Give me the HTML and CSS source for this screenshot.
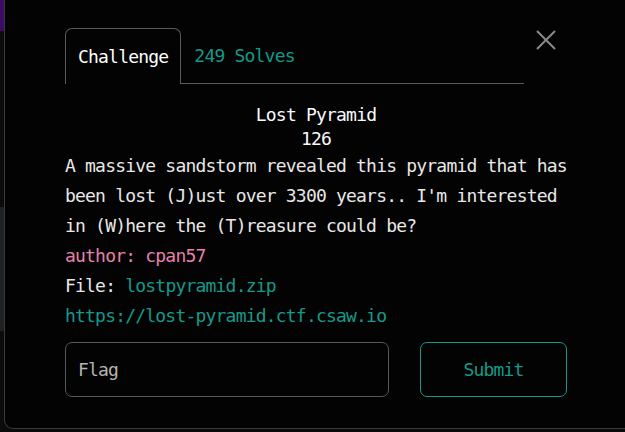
FILE: index.html
```html
<!DOCTYPE html>
<html>
<head>
<meta charset="utf-8">
<link rel="stylesheet" href="styles.css">
</head>
<body>
<div class="backdrop">
  <div class="bd-purple"></div>
  <div class="bd-strip"></div>
</div>
<div class="modal">
  <div class="header">
    <div class="tabs">
      <div class="tab active">Challenge</div>
      <div class="tab solves">249 Solves</div>
    </div>
    <button class="close" aria-label="Close">
      <svg width="20" height="20" viewBox="0 0 20 20"><path d="M1 1 L19 19 M19 1 L1 19" stroke="#8a8a8a" stroke-width="2" fill="none"/></svg>
    </button>
  </div>
  <div class="title">
    <div>Lost Pyramid</div>
    <div>126</div>
  </div>
  <div class="desc">
    <p>A massive sandstorm revealed this pyramid that has been lost (J)ust over 3300 years.. I'm interested in (W)here the (T)reasure could be?</p>
    <p class="author">author: cpan57</p>
    <p>File: <span class="link">lostpyramid.zip</span></p>
    <p class="link">https://lost-pyramid.ctf.csaw.io</p>
  </div>
  <div class="form">
    <div class="input">Flag</div>
    <div class="submit">Submit</div>
  </div>
</div>
</body>
</html>
```
FILE: styles.css
```css
html, body {
  margin: 0;
  padding: 0;
  background: #0b0b0b;
  width: 625px;
  height: 432px;
  overflow: hidden;
  font-family: "DejaVu Sans Mono", "Liberation Mono", monospace;
}
.backdrop {
  position: absolute;
  left: 0;
  top: 0;
  width: 4px;
  height: 432px;
}
.bd-purple {
  position: absolute;
  left: 0;
  top: 0;
  width: 4px;
  height: 31px;
  background: #3d0b63;
}
.bd-strip {
  position: absolute;
  left: 0;
  top: 207px;
  width: 4px;
  height: 124px;
  background: #1e2225;
}
.modal {
  position: relative;
  margin-left: 4px;
  width: 621px;
  height: 429px;
  box-sizing: border-box;
  border: 1px solid #3a3a3a;
  border-top: none;
  border-right: none;
  border-radius: 0 0 0 9px;
  background: #030303;
  padding: 28px 0 0 60px;
  font-size: 18px;
  letter-spacing: -0.8px;
  color: #e8e8e8;
}
.header {
  display: flex;
  align-items: flex-start;
  width: 503px;
}
.tabs {
  display: flex;
  width: 459px;
  border-bottom: 1px solid #5a5a5a;
  height: 55px;
}
.tab {
  height: 55px;
  box-sizing: border-box;
  display: flex;
  align-items: center;
}
.tab.active {
  border: 1px solid #5a5a5a;
  border-bottom: none;
  border-radius: 7px 7px 0 0;
  padding: 0 12px;
  height: 56px;
  background: #030303;
  color: #ffffff;
  font-weight: 500;
}
.tab.solves {
  padding-left: 13px;
  color: #149a8b;
}
.close {
  margin-left: 12px;
  margin-top: 2px;
  background: none;
  border: none;
  padding: 0;
  width: 20px;
  height: 20px;
  display: block;
}
.close svg { display: block; }
.title {
  width: 502px;
  text-align: center;
  line-height: 24px;
  margin-top: 19px;
  color: #fafafa;
}
.desc {
  width: 502px;
  line-height: 30px;
}
.desc p {
  margin: 0;
}
.author {
  color: #e781ad;
}
.link {
  color: #149a8b;
}
.form {
  display: flex;
  width: 502px;
  margin-top: 11px;
  gap: 31px;
}
.input {
  width: 324px;
  height: 55px;
  box-sizing: border-box;
  border: 1px solid #55585c;
  border-radius: 7px;
  padding-left: 12px;
  display: flex;
  align-items: center;
  color: #b4b4b4;
}
.submit {
  width: 147px;
  height: 55px;
  box-sizing: border-box;
  border: 1px solid #149a8b;
  border-radius: 7px;
  display: flex;
  align-items: center;
  justify-content: center;
  color: #149a8b;
}
```
